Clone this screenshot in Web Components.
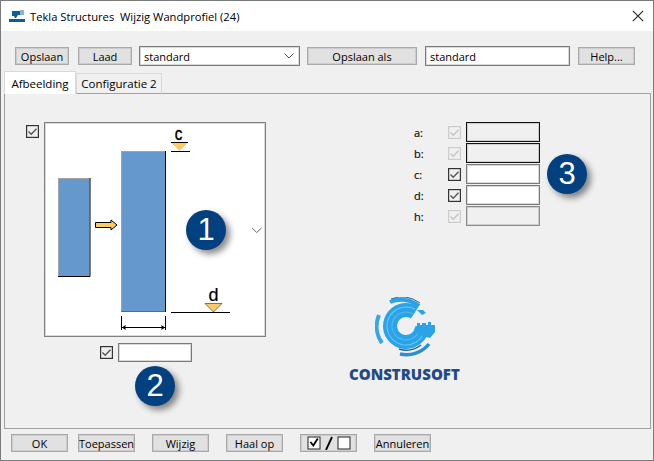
<!DOCTYPE html>
<html>
<head>
<meta charset="utf-8">
<title>Wijzig Wandprofiel</title>
<style>
  html, body { margin: 0; padding: 0; background: #f0f0f0; }
  body { font: 11px "Open Sans", "Noto Sans", sans-serif; color: #000; }
</style>
</head>
<body>
<ts-window>
  <ts-titlebar slot="title">Tekla Structures&nbsp; Wijzig Wandprofiel (24)</ts-titlebar>

  <ts-toolbar slot="toolbar">
    <ts-button style="--w:54px">Opslaan</ts-button>
    <ts-button style="--w:54px;margin-left:9px">Laad</ts-button>
    <ts-field combo style="--w:161px;--h:20px;margin-left:7px">standard</ts-field>
    <ts-button style="--w:110px;margin-left:7px">Opslaan als</ts-button>
    <ts-field style="--w:145px;--h:20px;margin-left:8px">standard</ts-field>
    <ts-button style="--w:57px;margin-left:8px">Help...</ts-button>
  </ts-toolbar>

  <ts-tabs slot="tabs">
    <ts-tab active>Afbeelding</ts-tab>
    <ts-tab>Configuratie 2</ts-tab>
  </ts-tabs>

  <ts-panel slot="panel">
    <ts-picture-column slot="left">
      <ts-check checked style="margin-top:3px"></ts-check>
      <ts-profile-diagram></ts-profile-diagram>
      <ts-check checked slot="under"></ts-check>
      <ts-field slot="under" style="--w:74px;--h:19px"></ts-field>
    </ts-picture-column>

    <ts-param-list slot="right">
      <ts-param label="a:" locked state="dark"></ts-param>
      <ts-param label="b:" locked state="dark"></ts-param>
      <ts-param label="c:" state="open"></ts-param>
      <ts-param label="d:" state="open"></ts-param>
      <ts-param label="h:" locked state="muted"></ts-param>
    </ts-param-list>
    <ts-logo slot="right">CONSTRUSOFT</ts-logo>

    <ts-badge slot="over" style="left:181px;top:116px">1</ts-badge>
    <ts-badge slot="over" style="left:130px;top:272px">2</ts-badge>
    <ts-badge slot="over" style="left:542px;top:60px">3</ts-badge>
  </ts-panel>

  <ts-footer slot="footer">
    <ts-button style="--w:57px">OK</ts-button>
    <ts-button style="--w:57px;margin-left:10px">Toepassen</ts-button>
    <ts-button style="--w:57px;margin-left:17px">Wijzig</ts-button>
    <ts-button style="--w:57px;margin-left:17px">Haal op</ts-button>
    <ts-button style="--w:57px;margin-left:17px">
      <svg width="44" height="14" viewBox="0 0 44 14" style="display:block">
        <rect x="1" y="1" width="12" height="12" fill="#fff" stroke="#222"/>
        <path d="M3.500 6l2.800 3.500 4.500-7" fill="none" stroke="#000" stroke-width="1.800"/>
        <path d="M19 14l6-13" stroke="#000" stroke-width="1.800"/>
        <rect x="31" y="1" width="12" height="12" fill="#fff" stroke="#222"/>
      </svg>
    </ts-button>
    <ts-button style="--w:57px;margin-left:17px">Annuleren</ts-button>
  </ts-footer>
</ts-window>

<script>
  function shell(tag, css, html) {
    customElements.define(tag, class extends HTMLElement {
      constructor() {
        super();
        this.attachShadow({ mode: 'open' });
      }
      connectedCallback() {
        this.shadowRoot.innerHTML = `<style>${css}</style>${typeof html === 'function' ? html(this) : html}`;
      }
    });
  }

  shell('ts-window', `
    :host { display: flex; flex-direction: column; width: 654px; height: 461px; box-sizing: border-box;
      border: 1px solid #7b7b7b; background: #f0f0f0; overflow: hidden; }
  `, `<slot name="title"></slot><slot name="toolbar"></slot><slot name="tabs"></slot><slot name="panel"></slot><slot name="footer"></slot>`);

  shell('ts-titlebar', `
    :host { display: flex; align-items: center; height: 30px; background: #fff; flex: none; }
    svg { display: block; }
    .icon { margin: 0 5px 0 8px; }
    .text { flex: 1; font-size: 11.2px; white-space: nowrap; }
    .close { margin-right: 9px; }
  `, `
    <svg class="icon" width="16" height="14" viewBox="0 0 16 14">
      <path d="M0 10h16v3H0z" fill="#0d5c9b"/>
      <path d="M3 2h8v4H9L7 9H6L5 7H3z" fill="#0d5c9b"/>
      <path d="M11 1h4v5h-4z" fill="#8ab5d6"/>
    </svg>
    <span class="text"><slot></slot></span>
    <svg class="close" width="12" height="12" viewBox="0 0 12 12"><path d="M.8.8l10.4 10.4M11.2.8L.8 11.2" stroke="#222" stroke-width="1.1" fill="none"/></svg>
  `);

  shell('ts-toolbar', `
    :host { display: flex; align-items: center; flex: none; height: 20px; padding: 15px 0 5px 14px; }
  `, `<slot></slot>`);

  shell('ts-footer', `
    :host { display: flex; align-items: center; flex: none; height: 18px; padding: 5px 0 8px 10px; }
  `, `<slot></slot>`);

  shell('ts-button', `
    :host { display: flex; align-items: center; justify-content: center; box-sizing: border-box; flex: none;
      width: var(--w); height: 18px; background: #e1e1e1; border: 1px solid #a9a9a9; font-size: 11px;
      white-space: nowrap; box-shadow: inset 0 0 0 1px rgba(170,170,170,.35); }
  `, `<slot></slot>`);

  shell('ts-field', `
    :host { display: flex; align-items: center; box-sizing: border-box; flex: none; width: var(--w); height: var(--h);
      background: var(--bg, #fff); border: 1px solid var(--line, #7a7a7a); padding: 0 4px; font-size: 11px; position: relative;
      box-shadow: inset 0 0 0 1px rgba(128,128,128,.3); }
    .text { flex: 1; }
    svg { display: block; margin-right: 1px; }
  `, el => `<span class="text"><slot></slot></span>${el.hasAttribute('combo')
    ? '<svg width="10" height="6" viewBox="0 0 10 6"><path d="M.5.5L5 5 9.500.5" fill="none" stroke="#555"/></svg>' : ''}`);

  shell('ts-tabs', `
    :host { display: flex; align-items: flex-end; flex: none; height: 23px; margin: 0 0 -1px 3px; position: relative; z-index: 1; }
  `, `<slot></slot>`);

  shell('ts-tab', `
    :host { display: flex; align-items: center; justify-content: center; box-sizing: border-box; font-size: 11.5px;
      width: 86px; height: 21px; background: #f0f0f0; border: 1px solid #d9d9d9; border-bottom-color: #a0a0a0; }
    :host([active]) { width: 72px; height: 23px; background: #fff; border-color: #d9d9d9; border-bottom: 0; }
  `, `<slot></slot>`);

  shell('ts-panel', `
    :host { display: flex; position: relative; flex: 1; box-sizing: border-box; margin: 0 2px 0 3px; background: #f0f0f0; border: 1px solid #a0a0a0; }
    .left { padding: 28px 0 0 21px; width: 344px; box-sizing: border-box; }
    .right { padding-top: 28px; }
  `, `<div class="left"><slot name="left"></slot></div><div class="right"><slot name="right"></slot></div><slot name="over"></slot>`);

  shell('ts-picture-column', `
    :host { display: block; }
    .top { display: flex; gap: 5px; align-items: flex-start; }
    .under { display: flex; align-items: center; gap: 5px; margin: 6px 0 0 74px; }
  `, `<div class="top"><slot></slot></div><div class="under"><slot name="under"></slot></div>`);

  shell('ts-check', `
    :host { display: block; width: 13px; height: 13px; flex: none; }
    svg { display: block; }
  `, el => {
    const line = el.getAttribute('line') || '#333';
    const tick = el.getAttribute('tick') || '#555';
    return `<svg width="13" height="13" viewBox="0 0 13 13"><rect x=".6" y=".6" width="11.800" height="11.800" fill="none" stroke="${line}" stroke-width="1.200"/>
      <path d="M2.500 6.500L5.200 9.200 10.500 3.800" fill="none" stroke="${tick}" stroke-width="1.400"/></svg>`;
  });

  shell('ts-profile-diagram', `
    :host { display: block; width: 222px; height: 215px; flex: none; box-sizing: border-box; background: #fff; border: 1px solid #7f7f7f;
      box-shadow: inset 0 0 0 1px rgba(128,128,128,.3); }
    svg { display: block; }
    text { font: 400 18px "Liberation Sans", sans-serif; stroke: #000; }
  `, `
    <svg width="220" height="213" viewBox="45 123 220 213">
      <rect x="58" y="178" width="31.500" height="98" fill="#6598cc"/>
      <path d="M58.500 276V178.500H89" fill="none" stroke="#a3a3a3"/>
      <path d="M58 276.500H90V178" fill="none" stroke="#000"/>
      <rect x="121" y="151" width="45" height="161" fill="#6598cc"/>
      <path d="M121.500 312V151.500H165.500" fill="none" stroke="#a3a3a3"/>
      <path d="M121 311.500H166" fill="none" stroke="#666"/>
      <path d="M165.500 151V312" fill="none" stroke="#000"/>
      <path d="M95.500 222.500H111V220L117 225 111 230V227.500H95.500Z" fill="#ffc966" stroke="#000"/>
      <path d="M171 142.500H188L179.500 151Z" fill="#ffc966"/>
      <path d="M171 142.500H188M171 151.500H190" stroke="#000"/>
      <text x="0" y="140" text-anchor="middle" stroke-width=".4" transform="translate(178.500 0) scale(.85 1)">c</text>
      <path d="M205 303.500H222L213.500 312Z" fill="#ffc966" stroke="#000" stroke-width=".5"/>
      <path d="M171 312.500H230" stroke="#000"/>
      <text x="213.500" y="300.500" text-anchor="middle" stroke-width=".2">d</text>
      <path d="M121.500 316V330M165.500 316V330M122 327.500H165" stroke="#000"/>
      <path d="M122 327.500L125.500 325V330ZM165 327.500L161.500 325V330Z" fill="#000"/>
      <path d="M252 228L256.700 232.500 261.500 228" fill="none" stroke="#666"/>
    </svg>
  `);

  shell('ts-param-list', `
    :host { display: flex; flex-direction: column; gap: 1px; margin-left: 65px; }
  `, `<slot></slot>`);

  shell('ts-param', `
    :host { display: flex; align-items: center; height: 20px; font-size: 11px; }
    .label { width: 34px; -webkit-text-stroke: .2px #333; }
    .gap { width: 5px; }
    ts-field.dark { --bg: #f0f0f0; --line: #111; }
    ts-field.open { --bg: #fff; --line: #7a7a7a; }
    ts-field.muted { --bg: #f0f0f0; --line: #8a8a8a; }
  `, el => {
    const locked = el.hasAttribute('locked');
    return `<span class="label">${el.getAttribute('label')}</span>
      <ts-check ${locked ? 'line="#cccccc" tick="#c4c4c4"' : ''}></ts-check>
      <span class="gap"></span>
      <ts-field class="${el.getAttribute('state')}" style="--w:74px;--h:20px"></ts-field>`;
  });

  shell('ts-logo', `
    :host { display: block; width: 112px; margin: 71px 0 0 0; }
    svg { display: block; margin-left: 26px; }
    .name { display: block; margin-top: 6px; font: 800 15px/18px "Open Sans", sans-serif; color: #1f4a87; white-space: nowrap; }
  `, `
    <svg width="62" height="62" viewBox="-31 -29 62 62" fill="none">
      <path d="M-6 28A29 29 0 0 0 23 18" stroke="#2a8fd0" stroke-width="3.500"/>
      <path d="M-16 -24A29 29 0 0 1 13 -20" stroke="#2aa3e8" stroke-width="4"/>
      <path d="M-15 -27A31 31 0 0 1 14 -23" stroke="#27639f" stroke-width="1"/>
      <path d="M-27 -11A29 29 0 0 0 -24 17" stroke="#37a6e6" stroke-width="4"/>
      <circle r="16" stroke="#2aa3e8" stroke-width="14" pathLength="360" stroke-dasharray="295 65" transform="rotate(8)"/>
      <circle r="19" stroke="#6cc6f4" stroke-width="1" pathLength="360" stroke-dasharray="285 75" transform="rotate(14)"/>
      <circle r="14" stroke="#57b9ef" stroke-width="1" pathLength="360" stroke-dasharray="285 75" transform="rotate(14)"/>
      <path d="M-7 23A24 24 0 0 0 15 19" stroke="#27639f" stroke-width="1.500"/>
      <path d="M9 0H11V-3H14V-1H16V-3H20V-1H22V-4H25V-1H29V6L24 12 13 9Z" fill="#2aa3e8"/>
      <path d="M11 -16h6l3 3-4 2z" fill="#2aa3e8"/>
    </svg>
    <span class="name"><slot></slot></span>
  `);

  shell('ts-badge', `
    :host { position: absolute; display: flex; align-items: center; justify-content: center; width: 40px; height: 40px;
      border-radius: 50%; background: #03407f; color: #fff; font: 400 31px/40px "Liberation Sans", sans-serif;
      box-shadow: 4px 4px 6px rgba(0,0,0,.45); }
  `, `<slot></slot>`);
</script>
</body>
</html>
